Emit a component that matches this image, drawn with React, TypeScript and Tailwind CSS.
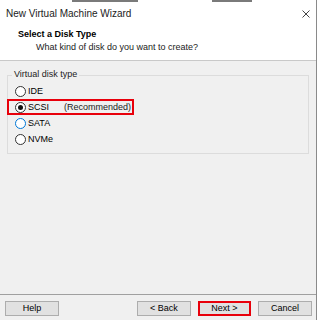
import React from "react";

const Radio = ({ checked, focus }: { checked?: boolean; focus?: boolean }) => (
  <span
    className={`flex items-center justify-center w-[11px] h-[11px] rounded-full bg-white border ${
      focus ? "border-[#0078d7]" : "border-[#333333]"
    }`}
  >
    {checked && <span className="w-[5px] h-[5px] rounded-full bg-[#111]" />}
  </span>
);

const options = [
  { label: "IDE" },
  { label: "SCSI", note: "(Recommended)", checked: true },
  { label: "SATA", focus: true },
  { label: "NVMe" },
];

const App = () => {
  return (
    <div
      className="w-[318px] h-[320px] bg-white flex text-black text-[9px] leading-none"
      style={{ fontFamily: '"Liberation Sans", Arial, sans-serif' }}
    >
      <div className="w-[317px] h-full flex flex-col border-r border-[#8a8a8a] bg-[#f0f0f0]">
        <div className="bg-white">
          <div className="flex h-[2px]">
            <span className="ml-[72px] w-[66px] bg-[#7a7a7a]" />
            <span className="ml-[74px] w-[40px] bg-[#7a7a7a]" />
          </div>
          <div className="h-[24px] flex items-center justify-between pl-[6px] pr-[6px]">
            <span className="text-[10px] text-[#222]">New Virtual Machine Wizard</span>
            <svg width="8" height="8" viewBox="0 0 8 8" className="text-[#444]">
              <path d="M0.5 0.5 L7.5 7.5 M7.5 0.5 L0.5 7.5" stroke="currentColor" strokeWidth="1" />
            </svg>
          </div>
          <div className="h-[35px] border-b border-[#c9c9c9] pt-[4px]">
            <p className="pl-[18px] font-bold">Select a Disk Type</p>
            <p className="pl-[36px] mt-[4px] text-[#222]">What kind of disk do you want to create?</p>
          </div>
        </div>

        <div className="flex-1 pt-[14px] px-[7px]">
          <div className="relative h-[79px] border border-[#dcdcdc] pt-[7px] pl-[7px]">
            <span className="absolute left-[4px] top-[-6px] px-[2px] bg-[#f0f0f0] text-[#222]">
              Virtual disk type
            </span>
            {options.map((o) => (
              <div key={o.label} className="h-[16px] flex items-center gap-[2px]">
                <Radio checked={o.checked} focus={o.focus} />
                <span className="w-[34px]">{o.label}</span>
                {o.note && <span className="text-[#222]">{o.note}</span>}
              </div>
            ))}
            <div className="absolute left-[-1px] top-[23px] w-[127px] h-[16px] border-2 border-[#e8000b]" />
          </div>
        </div>

        <div className="h-[26px] border-t border-[#a0a0a0] pt-[6px] pl-[5px] flex">
          <button className="w-[54px] h-[15px] bg-[#e1e1e1] border border-[#adadad]">Help</button>
          <button className="ml-[78px] w-[54px] h-[15px] bg-[#e1e1e1] border border-[#adadad]">
            &lt; Back
          </button>
          <button className="ml-[7px] w-[53px] h-[15px] bg-[#e1e1e1] border-2 border-[#e8000b]">
            Next &gt;
          </button>
          <button className="ml-[7px] w-[54px] h-[15px] bg-[#e1e1e1] border border-[#adadad]">
            Cancel
          </button>
        </div>
      </div>
    </div>
  );
};

export default App;
